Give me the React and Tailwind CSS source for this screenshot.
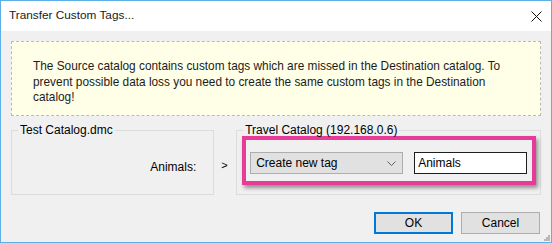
import { useState } from 'react';

const FONT = { fontFamily: '"Liberation Sans", Arial, sans-serif' };

function CloseIcon() {
  return (
    <svg width="11" height="11" viewBox="0 0 11 11" className="block">
      <path d="M0.5 0.5 L10.5 10.5 M10.5 0.5 L0.5 10.5" stroke="#111" strokeWidth="1" fill="none" />
    </svg>
  );
}

function Chevron() {
  return (
    <svg width="9" height="5" viewBox="0 0 9 5" className="block">
      <path d="M0.5 0.5 L4.5 4.5 L8.5 0.5" stroke="#606060" strokeWidth="1" fill="none" />
    </svg>
  );
}

function Grip() {
  const dots = [[4, 0], [2, 2], [4, 2], [0, 4], [2, 4], [4, 4]];
  return (
    <svg width="6" height="6" viewBox="0 0 6 6" className="absolute right-[1px] bottom-[1px]">
      {dots.map(([x, y], i) => (
        <rect key={i} x={x} y={y} width="2" height="2" fill="#b8b8b8" />
      ))}
    </svg>
  );
}

export default function App() {
  const [tagName, setTagName] = useState('Animals');

  return (
    <div
      className="relative w-[552px] h-[243px] border border-[#5eaee8] bg-[#f0f0f0] flex flex-col text-[12px] text-black"
      style={FONT}
    >
      {/* Title bar */}
      <div className="h-[30px] bg-white flex items-center justify-between pl-[8px] pr-[9px] shrink-0">
        <span className="text-[11.8px] text-[#1a1a1a]">Transfer Custom Tags...</span>
        <CloseIcon />
      </div>

      <div className="flex flex-col px-[10px] pt-[10px]">
        {/* Info box */}
        <div className="h-[75px] border border-dashed border-[#b9b9b9] bg-[#ffffe8] pl-[21px] pr-[10px] pt-[17px] text-[11.85px] leading-[15.5px] text-[#1c1c1c] whitespace-nowrap">
          The Source catalog contains custom tags which are missed in the Destination catalog. To<br />
          prevent possible data loss you need to create the same custom tags in the Destination<br />
          catalog!
        </div>

        {/* Group boxes */}
        <div className="flex items-start mt-[6px]">
          <fieldset className="w-[204px] h-[73px] border border-[#dcdcdc]">
            <legend className="ml-[6px] px-[2px] leading-[16px]">Test Catalog.dmc</legend>
            <div className="h-full flex items-center justify-end pr-[17px]">
              <span className="mt-[2px]">Animals:</span>
            </div>
          </fieldset>

          <div className="w-[22px] pl-[7px] pt-[38px] text-[11px] leading-none">&gt;</div>

          <fieldset className="w-[306px] h-[73px] border border-[#dcdcdc]">
            <legend className="ml-[6px] px-[2px] leading-[16px]">Travel Catalog (192.168.0.6)</legend>
            <div className="pl-[5px]">
              <div className="w-[294px] h-[49px] border-[4px] border-[#e63c98] shadow-[2px_3px_4px_rgba(0,0,0,0.4)] mt-[-2px] pl-[4px] pr-[5px] pt-[12px] flex items-start justify-between">
                <div className="w-[153px] h-[22px] bg-[#e1e1e1] border border-[#adadad] flex items-center justify-between pl-[5px] pr-[6px]">
                  <span>Create new tag</span>
                  <Chevron />
                </div>
                <input
                  value={tagName}
                  onChange={(e) => setTagName(e.target.value)}
                  className="w-[113px] h-[22px] bg-white border border-[#1e1e1e] px-[3px] text-[12px] outline-none"
                  style={FONT}
                />
              </div>
            </div>
          </fieldset>
        </div>

        {/* Buttons */}
        <div className="flex justify-end gap-[8px] mt-[17px] pr-[1px]">
          <button className="w-[79px] h-[22px] bg-[#e1e1e1] border-2 border-[#0078d7] text-[12px] leading-none">OK</button>
          <button className="w-[79px] h-[22px] bg-[#e1e1e1] border border-[#adadad] text-[12px] leading-none">Cancel</button>
        </div>
      </div>

      <Grip />
    </div>
  );
}
